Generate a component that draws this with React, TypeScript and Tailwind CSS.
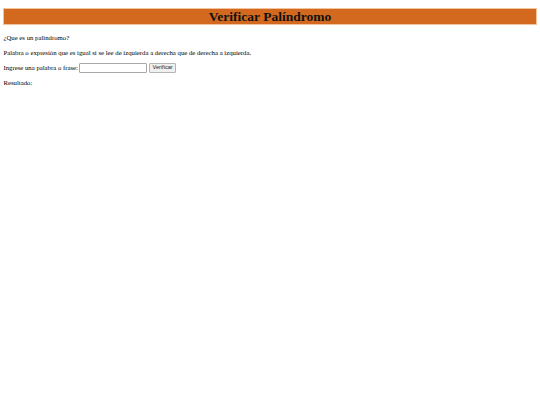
import React from "react";

export default function App() {
  return (
    <div
      className="min-h-[405px] bg-white text-black px-[3.4px] pt-[0.1px] text-[6.75px] leading-[1.15]"
      style={{ fontFamily: '"Liberation Serif", "Times New Roman", serif' }}
    >
      <h1 className="mt-[8px] mb-[9px] bg-[#d2691e] border-[0.5px] border-[#f2c39c] text-center font-bold text-[13.5px] leading-[15px] text-[#111]">
        Verificar Palíndromo
      </h1>
      <p className="my-[6.75px]">¿Que es un palíndromo?</p>
      <p className="my-[6.75px]">
        Palabra o expresión que es igual si se lee de izquierda a derecha que de derecha a izquierda.
      </p>
      <p className="my-[6.75px] flex items-center">
        <span>Ingrese una palabra o frase:</span>
        <input
          type="text"
          className="ml-[1.5px] w-[68px] h-[9.5px] border-[0.5px] border-[#a8a8a8] rounded-[1px] bg-white outline-none"
        />
        <button
          className="ml-[1.5px] h-[9.5px] px-[2.5px] border-[0.5px] border-[#b4b4b4] rounded-[1px] bg-[#f0f0f0] text-[5.6px] leading-none text-[#222]"
          style={{ fontFamily: '"Liberation Sans", Arial, sans-serif' }}
        >
          Verificar
        </button>
      </p>
      <p className="my-[6.75px]">Resultado:</p>
    </div>
  );
}
